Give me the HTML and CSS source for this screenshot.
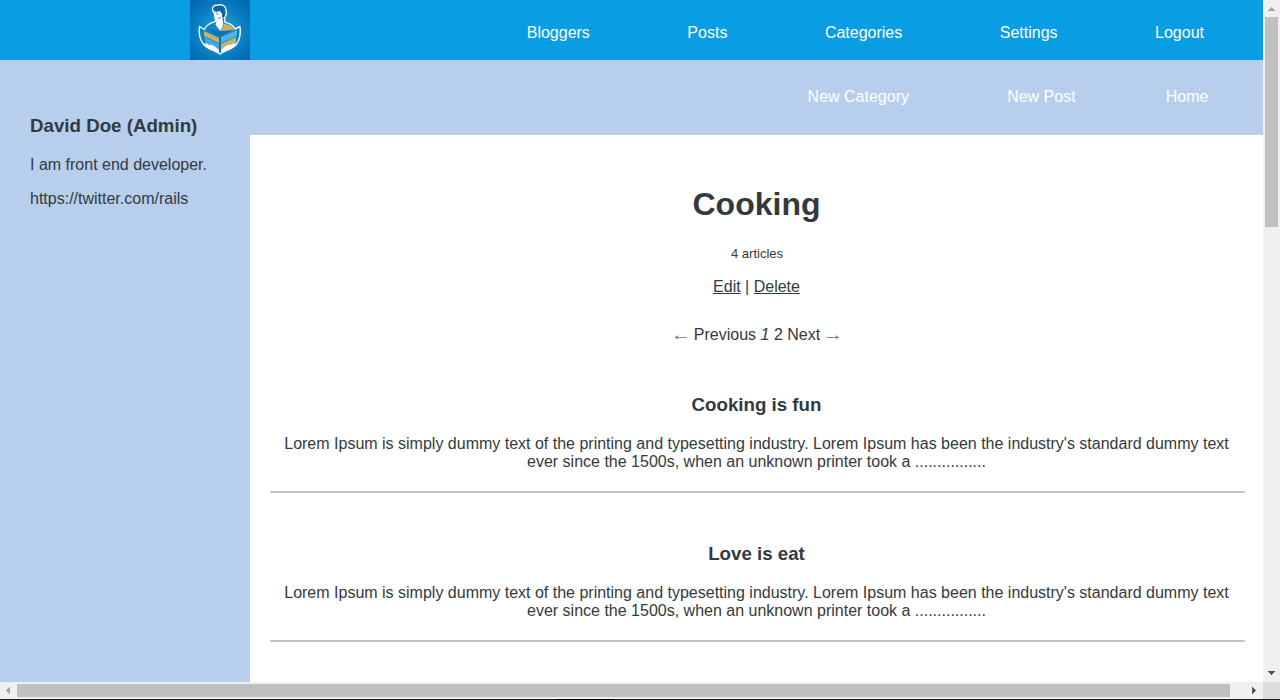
FILE: index.html
```
<!DOCTYPE html>
<html lang="en">
<head>
<meta charset="utf-8">
<title>Cooking</title>
<link rel="stylesheet" href="styles.css">
</head>
<body>
<div class="window">
  <div class="page">
    <header class="topbar">
      <svg class="logo" viewBox="0 0 60 60">
        <defs>
          <radialGradient id="glow" cx="50%" cy="52%" r="65%">
            <stop offset="0" stop-color="#2fa5dc"/>
            <stop offset=".55" stop-color="#0c83c6"/>
            <stop offset="1" stop-color="#0168b1"/>
          </radialGradient>
        </defs>
        <rect width="60" height="60" fill="url(#glow)"/>
        <path d="M22.500 10C22 6 25 5 28 5c4-1 8 1 8 5l.5 4-2 4 .5 4.500c5 .5 8 3 10 6.500l5-2.500c1 7-.5 13-3 17-4 6-11 6-17 10.500-6-4.500-13-4.500-17-10.500-3-4-4.500-10-3.500-17l5 3c2-4 5-6.500 10-7.500l1.500-1-1-3-.5-4z" fill="#0d83c6" stroke="#f4fbff" stroke-width="1.400" stroke-linejoin="round"/>
        <path d="M24.500 10l9 0 1 5-2 4 1 5-3 7-5-6 1-4-1.500-4z" fill="#fff"/>
        <path d="M23.500 9.500c0-3 3-3.500 5-3.500 4-1 6.500 1 6.500 4v4l-1.500 4-1.500-1 0-3-2-3-4 1z" fill="#0768a6"/>
        <path d="M26 14h2.500M28 18.500l3-1" stroke="#2b7eb2" stroke-width=".8"/>
        <path d="M15 29c2-3 5-5 9-6l5 8-5 1z" fill="#1688c9"/>
        <path d="M34 24c5 0 8 2 10 6l-9 2-4-1z" fill="#c9b067"/>
        <path d="M17 28l12 4 2-1 12-1-11 6h-5z" fill="#0873b4"/>
        <path d="M14 31l15 7v5l-15-7z" fill="#c9b067"/>
        <path d="M47 30v6l-16 7v-6z" fill="#52b2e5"/>
        <path d="M15 37l14 7v7l-14-8z" fill="#45a8de"/>
        <path d="M46 37v6l-15 7v-6z" fill="#c9b067"/>
        <path d="M29 35h2v17h-2z" fill="#0874b7"/>
        <path d="M14 44c2-1 4 0 5 1 4-1 6 2 10 5v3c-5-3-12-3-15-9zM46 44c-2-1-4 0-5 1-4-1-6 2-10 5v3c5-3 12-3 15-9z" fill="#fff"/>
      </svg>
      <nav class="main-nav"><a>Bloggers</a><a>Posts</a><a>Categories</a><a>Settings</a><a>Logout</a></nav>
    </header>
    <div class="body">
      <aside class="sidebar">
        <h3 class="name">David Doe (Admin)</h3>
        <p class="bio">I am front end developer.</p>
        <p class="bio">https://twitter.com/rails</p>
      </aside>
      <main class="main">
        <nav class="sub-nav"><a>New Category</a><a>New Post</a><a class="home">Home</a></nav>
        <section class="content">
          <h1 class="title">Cooking</h1>
          <p class="count">4 articles</p>
          <p class="actions"><a class="link">Edit</a> | <a class="link">Delete</a></p>
          <div class="pagination"><span class="arrow">←</span> Previous <em>1</em> 2 Next <span class="arrow">→</span></div>
          <article class="post">
            <h3 class="post-title">Cooking is fun</h3>
            <p class="text">Lorem Ipsum is simply dummy text of the printing and typesetting industry. Lorem Ipsum has been the industry's standard dummy text ever since the 1500s, when an unknown printer took a ................</p>
            <div class="rule"></div>
          </article>
          <article class="post">
            <h3 class="post-title">Love is eat</h3>
            <p class="text">Lorem Ipsum is simply dummy text of the printing and typesetting industry. Lorem Ipsum has been the industry's standard dummy text ever since the 1500s, when an unknown printer took a ................</p>
            <div class="rule"></div>
          </article>
        </section>
      </main>
    </div>
  </div>
  <div class="scroll-y">
    <svg class="btn" viewBox="0 0 17 17" shape-rendering="crispEdges"><path d="M8 7h1v1h1v1h1v1h1v1H5v-1h1V9h1V8h1z" fill="#a3a3a3"/></svg>
    <div class="thumb-y"></div>
    <svg class="btn end" viewBox="0 0 17 17" shape-rendering="crispEdges"><path d="M5 6h7v1h-1v1h-1v1H9v1H8V9H7V8H6V7H5z" fill="#505050"/></svg>
  </div>
  <div class="scroll-x">
    <svg class="btn" viewBox="0 0 17 17" shape-rendering="crispEdges"><path d="M10 5v7H9v-1H8v-1H7V9H6V8h1V7h1V6h1V5z" fill="#a3a3a3"/></svg>
    <div class="thumb-x"></div>
    <svg class="btn end" viewBox="0 0 17 17" shape-rendering="crispEdges"><path d="M6 5h1v1h1v1h1v1h1v1H9v1H8v1H7v1H6z" fill="#505050"/></svg>
  </div>
  <div class="corner"></div>
  <div class="edge"></div>
</div>
</body>
</html>
```

FILE: styles.css
```
* { box-sizing: border-box; }
body {
  margin: 0;
  overflow: hidden;
  font: 16px/18px "Liberation Sans", Arial, sans-serif;
  color: #333a3d;
}
h1, h3, p { margin: 0; }
.window {
  display: grid;
  grid-template-columns: 1263px 17px;
  grid-template-rows: 682px 17px 1px;
  width: 1280px;
  height: 700px;
}
.page { display: flex; flex-direction: column; overflow: hidden; background: #fff; }
.topbar {
  display: flex;
  flex: 0 0 60px;
  justify-content: space-between;
  padding: 0 59px 0 190px;
  background: #099de4;
  color: #fff;
}
.logo { width: 60px; height: 60px; }
.main-nav { display: flex; gap: 97.5px; padding-top: 24px; }
.body { display: flex; flex: 1; min-height: 0; }
.sidebar { flex: 0 0 250px; padding: 55px 20px 0 30px; background: #b8ceed; }
.name { margin-bottom: 19px; font-size: 18.72px; line-height: 22px; }
.bio { margin-bottom: 16px; white-space: nowrap; }
.main { flex: 1; min-width: 0; }
.sub-nav {
  display: flex;
  justify-content: flex-end;
  gap: 98.2px;
  height: 75px;
  padding: 28px 54.5px 0 0;
  background: #b8ceed;
  color: #fff;
}
.home { margin-left: -8px; }
.content { padding: 51px 20px 0; text-align: center; }
.title { margin-bottom: 23px; font-size: 32px; line-height: 37px; }
.count { margin-bottom: 17px; padding-left: 1px; font-size: 13px; line-height: 15px; }
.actions { margin-bottom: 30px; }
.link { text-decoration: underline; }
.arrow {
  display: inline-block;
  color: #6b7275;
  font-family: "Liberation Serif", serif;
  line-height: 1;
  transform: scaleX(1.25);
}
.pagination { height: 18px; margin-bottom: 50px; padding-left: 1px; }
.post { margin-bottom: 50px; }
.post-title { margin-bottom: 19px; font-size: 18.72px; line-height: 22px; }
.text { margin-bottom: 20px; }
.rule { width: 975px; height: 2px; border-radius: 1px; background: #c4c4c4; }
.scroll-y, .scroll-x { display: flex; background: #f0f0f0; }
.scroll-y { flex-direction: column; align-items: center; }
.scroll-x { align-items: center; }
.btn { flex: none; width: 17px; height: 17px; }
.thumb-y { width: 13px; height: 210px; background: #c0c0c0; }
.thumb-x { width: 1213px; height: 13px; background: #c0c0c0; }
.scroll-y .end { margin-top: auto; }
.scroll-x .end { margin-left: auto; }
.corner { background: #dcdcdc; }
.edge {
  grid-column: 1 / 3;
  background: linear-gradient(90deg, #20212b 556px, #000 556px, #000 614px, #20212b 614px);
}
```
